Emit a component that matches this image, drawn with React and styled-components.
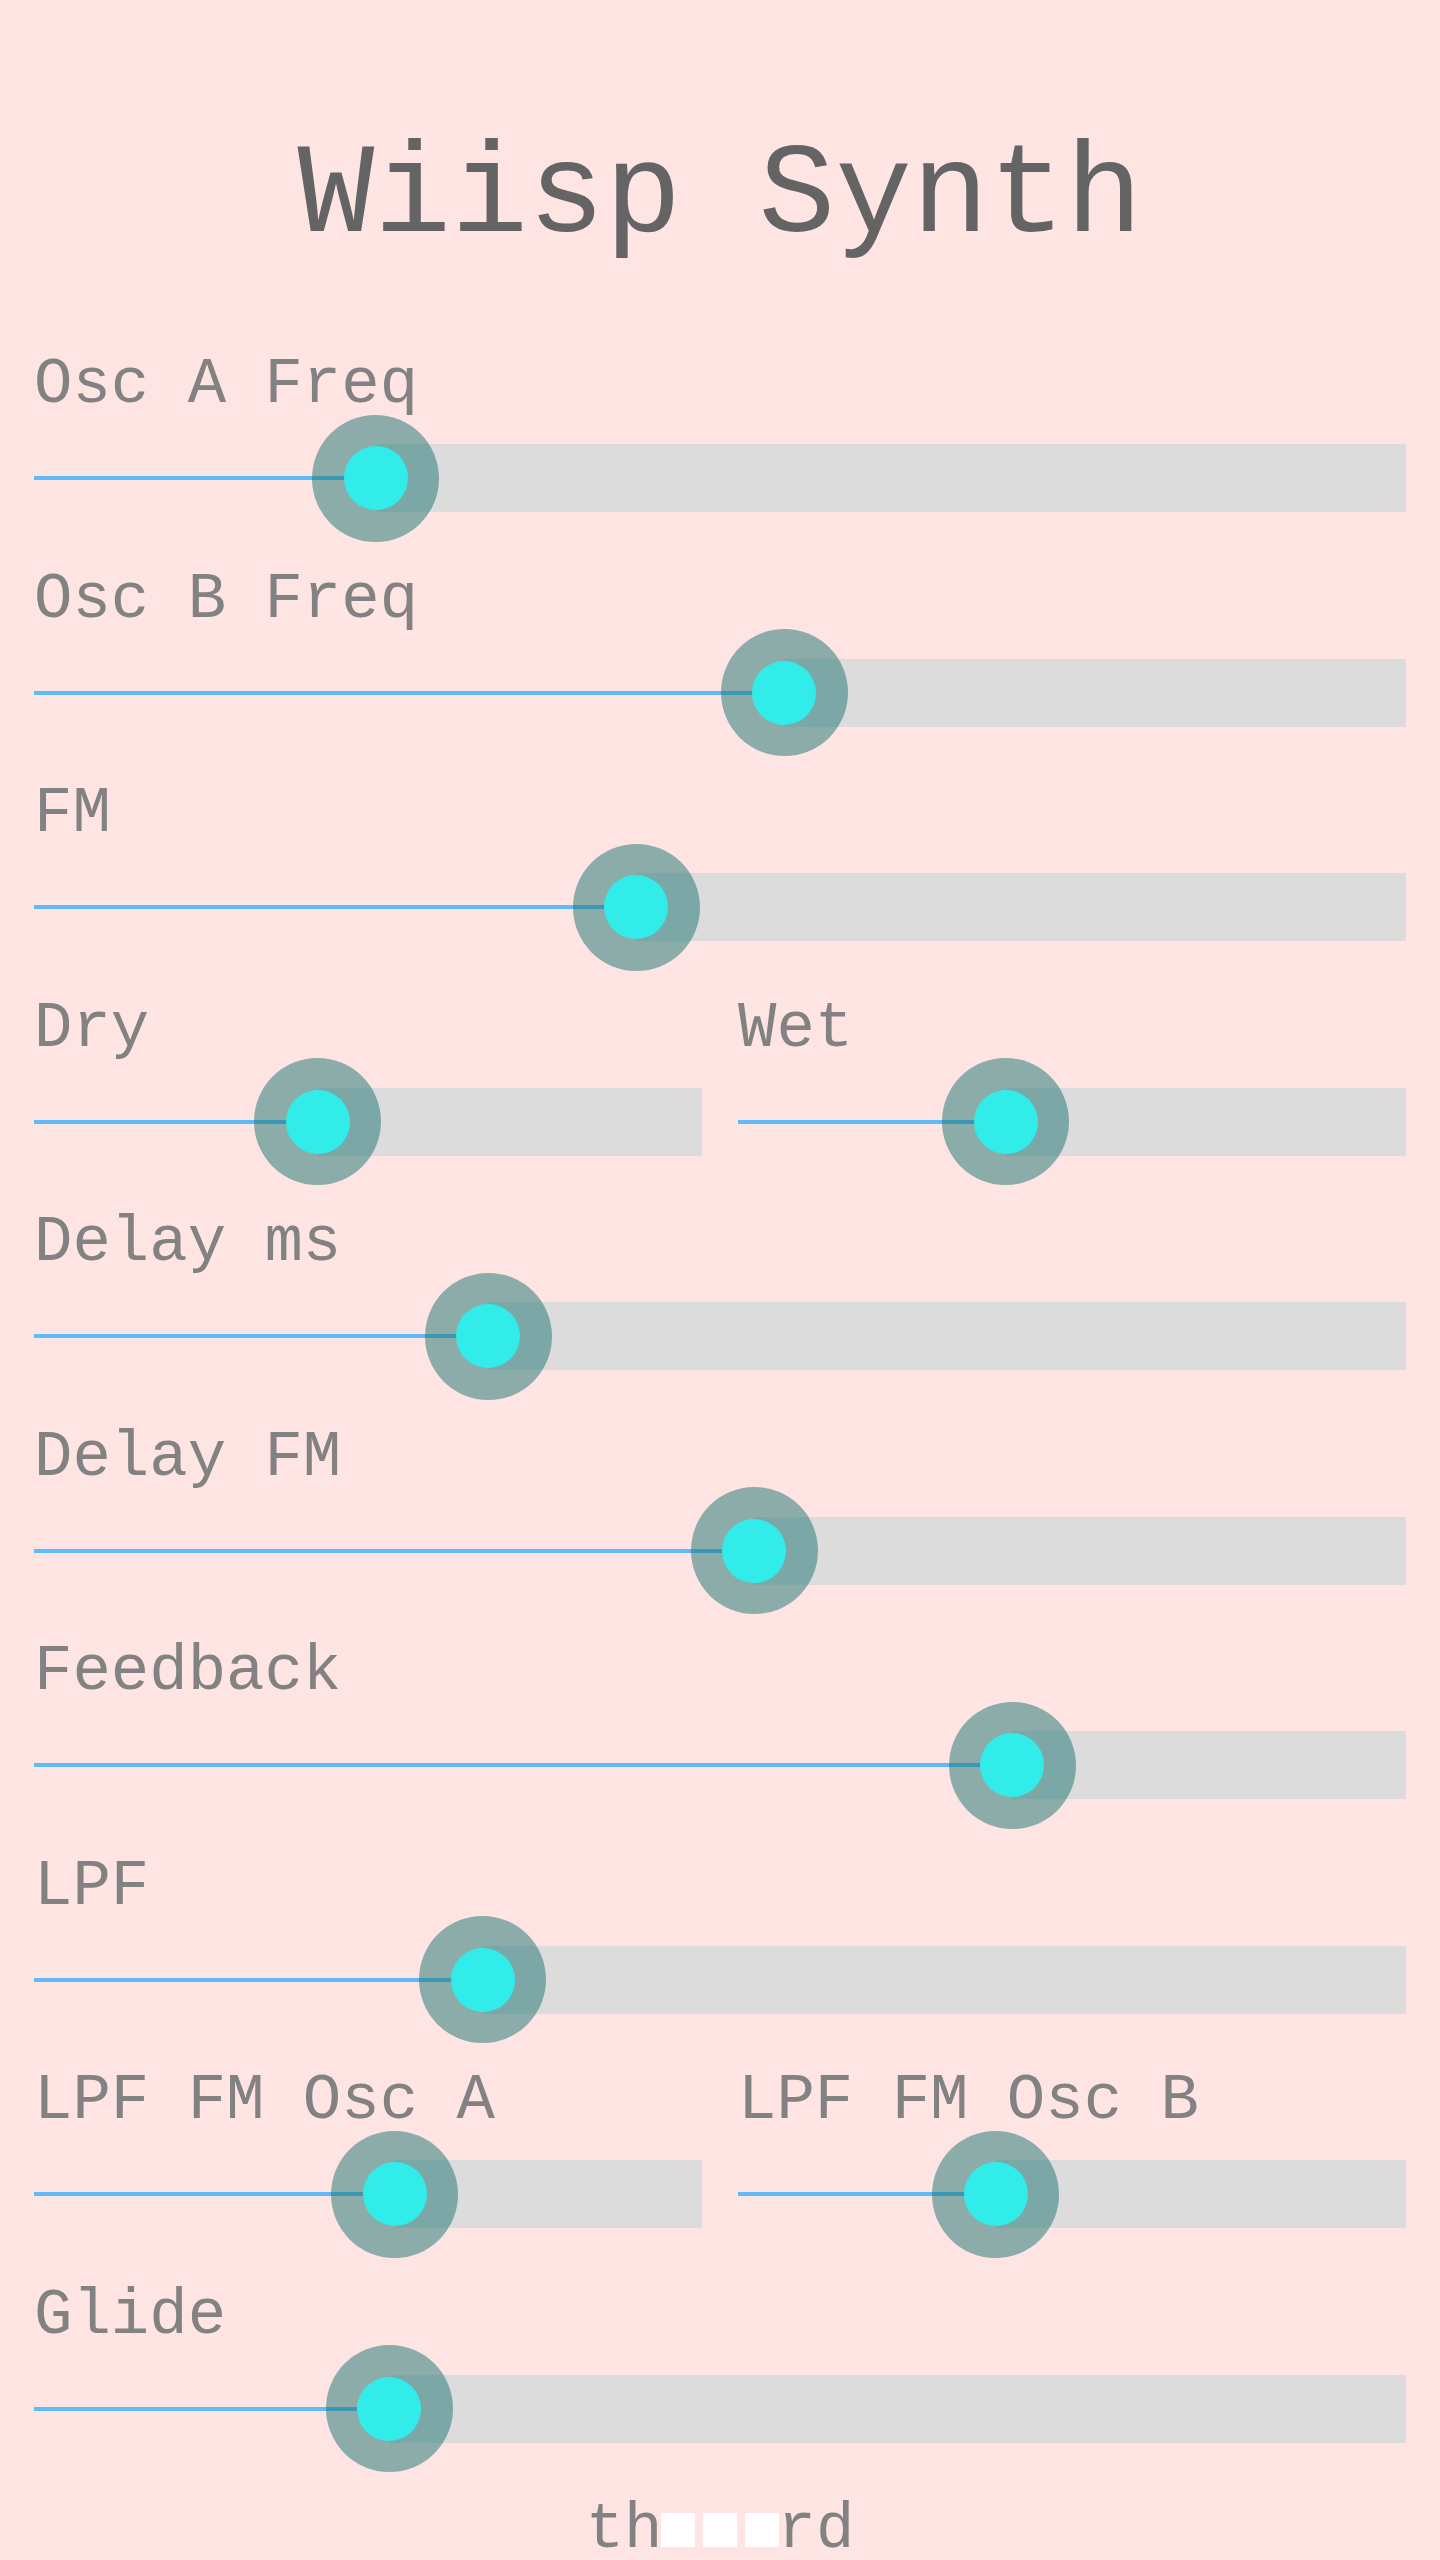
import React from "react";
import styled, { createGlobalStyle } from "styled-components";

const GlobalStyle = createGlobalStyle`
  html, body {
    margin: 0;
    padding: 0;
    background: #ffe4e4;
  }
  body {
    font-family: "Liberation Mono", "Courier New", monospace;
  }
`;

const Page = styled.div`
  display: flex;
  flex-direction: column;
  padding: 124px 34px 0;
  min-height: 2560px;
  box-sizing: border-box;
`;

const Title = styled.h1`
  margin: 0 0 80px;
  font-size: 128px;
  line-height: 145px;
  font-weight: 400;
  color: #646464;
  text-align: center;
`;

const Controls = styled.div`
  display: flex;
  flex-direction: column;
  gap: 28.5px;
`;

const Row = styled.div`
  display: grid;
  grid-template-columns: repeat(${(p) => p.cols || 1}, 1fr);
  column-gap: 36px;
`;

const Field = styled.div`
  display: flex;
  flex-direction: column;
`;

const Label = styled.div`
  font-size: 64px;
  line-height: 72px;
  color: #828282;
  white-space: nowrap;
`;

const Track = styled.div`
  position: relative;
  height: 114px;
  display: flex;
  align-items: center;
`;

const Filled = styled.div`
  height: 4px;
  background: #5fbafa;
`;

const Rest = styled.div`
  flex: 1;
  height: 68px;
  background: #dcdcdc;
`;

const Thumb = styled.div`
  position: absolute;
  top: 50%;
  width: 127px;
  height: 127px;
  margin: -63.5px 0 0 -63.5px;
  border-radius: 50%;
  background: rgba(25, 115, 112, 0.5);
  display: flex;
  align-items: center;
  justify-content: center;

  &::after {
    content: "";
    width: 64px;
    height: 64px;
    border-radius: 50%;
    background: #32ece9;
  }
`;

const Footer = styled.div`
  font-size: 64px;
  line-height: 72px;
  color: #828282;
  display: flex;
  justify-content: center;
  align-items: baseline;
`;

const Blocks = styled.span`
  display: inline-flex;
  gap: 8px;
  margin: 0 -1px 0 -2px;
`;

const Block = styled.span`
  display: inline-block;
  width: 34px;
  height: 34px;
  margin-bottom: 5px;
  background: #fff;
`;

const Slider = ({ label, value }) => (
  <Field>
    <Label>{label}</Label>
    <Track>
      <Filled style={{ width: `${value}%` }} />
      <Rest />
      <Thumb style={{ left: `${value}%` }} />
    </Track>
  </Field>
);

const rows = [
  [{ label: "Osc A Freq", value: 24.9 }],
  [{ label: "Osc B Freq", value: 54.7 }],
  [{ label: "FM", value: 43.9 }],
  [
    { label: "Dry", value: 42.5 },
    { label: "Wet", value: 40.1 },
  ],
  [{ label: "Delay ms", value: 33.1 }],
  [{ label: "Delay FM", value: 52.5 }],
  [{ label: "Feedback", value: 71.3 }],
  [{ label: "LPF", value: 32.7 }],
  [
    { label: "LPF FM Osc A", value: 54 },
    { label: "LPF FM Osc B", value: 38.6 },
  ],
  [{ label: "Glide", value: 25.9 }],
];

const App = () => {
  return (
    <>
      <GlobalStyle />
      <Page>
        <Title>Wiisp Synth</Title>
        <Controls>
          {rows.map((row, i) => (
            <Row key={i} cols={row.length}>
              {row.map((s) => (
                <Slider key={s.label} label={s.label} value={s.value} />
              ))}
            </Row>
          ))}
          <Footer>
            <span>th</span>
            <Blocks>
              <Block />
              <Block />
              <Block />
            </Blocks>
            <span>rd</span>
          </Footer>
        </Controls>
      </Page>
    </>
  );
};

export default App;
